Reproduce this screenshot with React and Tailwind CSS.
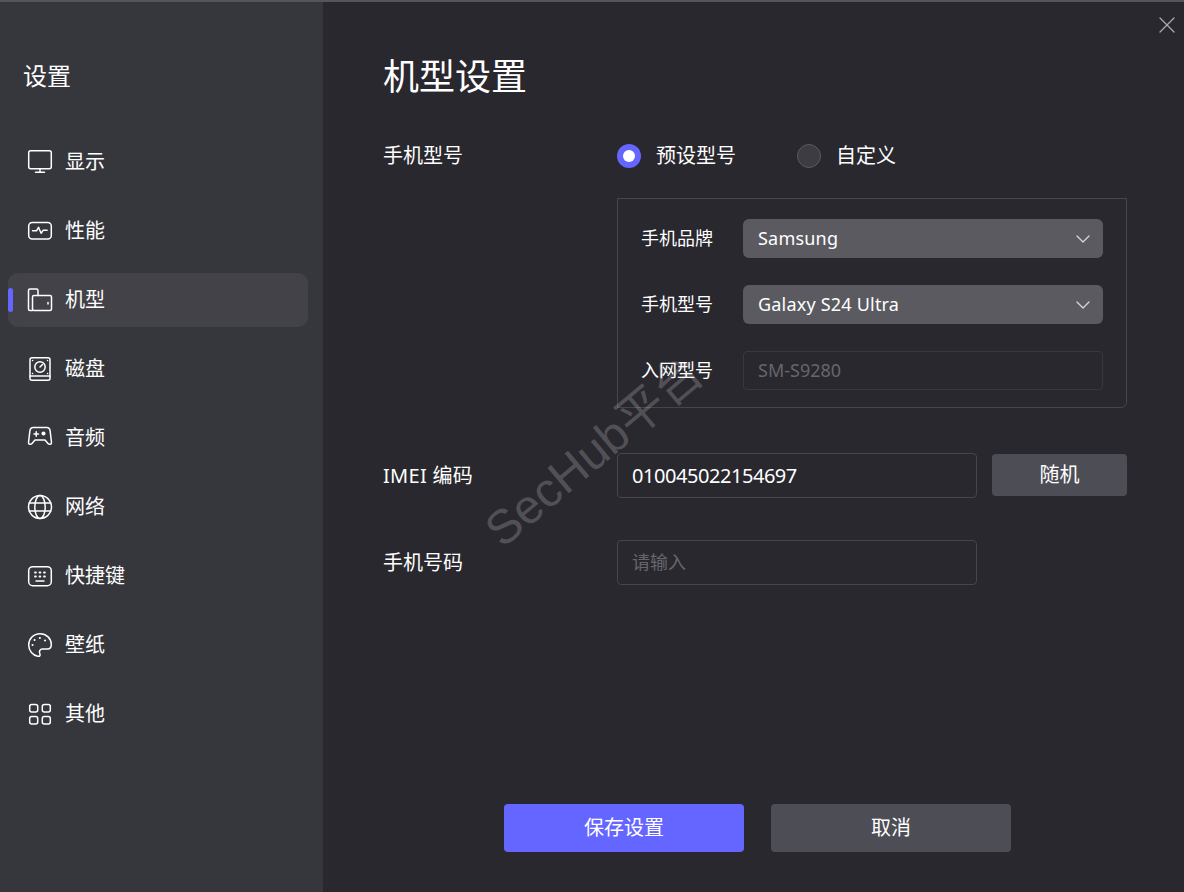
import { X, ChevronDown } from 'lucide-react';

const iconProps = {
  width: 26,
  height: 26,
  viewBox: '0 0 26 26',
  fill: 'none',
  stroke: 'currentColor',
  strokeWidth: 1.5,
  strokeLinecap: 'round',
  strokeLinejoin: 'round',
};

const MonitorIcon = () => (
  <svg {...iconProps}>
    <rect x="1.700" y="1.700" width="22.600" height="18" rx="2" />
    <path d="M13 20v3M8.500 23.300h9" />
  </svg>
);

const PulseIcon = () => (
  <svg {...iconProps}>
    <rect x="1.700" y="4.500" width="22.600" height="16.500" rx="3.500" />
    <path d="M5.500 12.800h4l2-3.500 2.600 6 2-3h4" />
  </svg>
);

const PhoneIcon = () => (
  <svg {...iconProps}>
    <path d="M5.500 23.500H3a1.500 1.500 0 0 1-1.500-1.500V3.500A1.500 1.500 0 0 1 3 2h6.500A1.500 1.500 0 0 1 11 3.500V8.500" />
    <rect x="5.500" y="8.500" width="19" height="15" rx="1.500" />
    <path d="M21 15.500v1.500" />
  </svg>
);

const DiskIcon = () => (
  <svg {...iconProps}>
    <rect x="3" y="1.700" width="20" height="22.600" rx="2" />
    <circle cx="13" cy="11" r="5.200" />
    <path d="M13 11l2.500-2.500M3 20h20" />
    <path d="M5.500 4.500h.1M20.500 4.500h.1M5.500 17.500h.1M20.500 17.500h.1" />
  </svg>
);

const GamepadIcon = () => (
  <svg {...iconProps}>
    <path d="M6 2.500h14c1.500 0 2.500 1 3 2.500l1.500 12.500c.2 1.800-2.300 2.500-3.500 1l-3-3.500H8l-3 3.500c-1.200 1.500-3.700.8-3.500-1L3 5c.5-1.500 1.500-2.500 3-2.500z" />
    <path d="M7 9h4.500M9.200 6.800v4.400" />
    <circle cx="16.500" cy="8.500" r="1.300" fill="currentColor" />
  </svg>
);

const GlobeIcon = () => (
  <svg {...iconProps}>
    <circle cx="13" cy="13" r="11.500" />
    <ellipse cx="13" cy="13" rx="5.200" ry="11.500" />
    <path d="M2.300 9h21.400M2.300 17h21.400" />
  </svg>
);

const KeyboardIcon = () => (
  <svg {...iconProps}>
    <rect x="1.700" y="3.700" width="22.600" height="19" rx="4" />
    <path d="M8 9.500h.9M12.500 9.500h.9M17 9.500h.9M8 13.500h.9M12.500 13.500h.9M17 13.500h.9" strokeWidth="1.800" />
    <path d="M9 18h8" />
  </svg>
);

const PaletteIcon = () => (
  <svg {...iconProps}>
    <path d="M13 1.700C6.500 1.700 1.700 6.700 1.700 13c0 6 4.200 10.500 9 11.300 2.500.4 2.800-1.300 2-3-.8-1.900.2-4.300 2.800-4.300h5c2.300 0 3.800-1.800 3.800-4.500C24.300 6.500 19.500 1.700 13 1.700z" />
    <path d="M5.500 13h.1M7.500 8h.1M12.800 6h.1M18 8.500h.1" strokeWidth="2" />
  </svg>
);

const GridIcon = () => (
  <svg {...iconProps}>
    <rect x="2.700" y="3.500" width="8" height="7.500" rx="2" />
    <rect x="15.300" y="3.500" width="8" height="7.500" rx="2" />
    <rect x="2.700" y="15.500" width="8" height="7.500" rx="2" />
    <rect x="15.300" y="15.500" width="8" height="7.500" rx="2" />
  </svg>
);

const menu = [
  { label: '显示', icon: MonitorIcon },
  { label: '性能', icon: PulseIcon },
  { label: '机型', icon: PhoneIcon, active: true },
  { label: '磁盘', icon: DiskIcon },
  { label: '音频', icon: GamepadIcon },
  { label: '网络', icon: GlobeIcon },
  { label: '快捷键', icon: KeyboardIcon },
  { label: '壁纸', icon: PaletteIcon },
  { label: '其他', icon: GridIcon },
];

const Select = ({ value }) => (
  <div className="flex h-[39px] w-[360px] items-center justify-between rounded-md bg-[#5a5a60] pl-[15px] pr-[8px] text-[18px] tracking-[0.2px] text-white">
    <span>{value}</span>
    <ChevronDown size={24} strokeWidth={1.3} className="text-[#d8d8dc]" />
  </div>
);

const SubRow = ({ label, children }) => (
  <div className="flex items-center">
    <span className="mb-[2px] w-[102px] text-[18px] leading-none text-white">{label}</span>
    {children}
  </div>
);

const App = () => {
  return (
    <div
      className="relative flex h-[892px] w-[1184px] overflow-hidden border-t-2 border-[#55565b] bg-[#29282e] text-white"
      style={{ fontFamily: '"Noto Sans", "Noto Sans CJK SC", sans-serif' }}
    >
      <aside className="flex w-[323px] shrink-0 flex-col bg-[#36373d]">
        <div className="flex h-[133px] items-start pl-[23px] pt-[56px] text-[24px] leading-[36px]">设置</div>
        <nav className="flex flex-col gap-[15px] pl-[8px]">
          {menu.map(({ label, icon: Icon, active }) => (
            <div
              key={label}
              className={`relative flex h-[54px] w-[300px] items-center gap-[12px] rounded-[10px] pl-[19px] text-[20px] ${active ? 'bg-[#434248]' : ''}`}
            >
              {active && <span className="absolute left-0 top-[15px] h-[24px] w-[5px] rounded-full bg-[#6565ff]" />}
              <Icon />
              <span>{label}</span>
            </div>
          ))}
        </nav>
      </aside>

      <main className="flex flex-1 flex-col pl-[60px]">
        <h1 className="mt-[48px] text-[36px] leading-[54px]">机型设置</h1>

        <div className="mt-[37px] flex items-center text-[20px] leading-[30px]">
          <span className="w-[234px]">手机型号</span>
          <div className="flex items-center gap-[15px]">
            <span className="flex h-[24px] w-[24px] items-center justify-center rounded-full bg-[#6565ff]">
              <span className="h-[12px] w-[12px] rounded-full bg-white" />
            </span>
            <span>预设型号</span>
          </div>
          <div className="ml-[61px] flex items-center gap-[15px]">
            <span className="h-[24px] w-[24px] rounded-full border border-[#5a5a60] bg-[#3c3c42]" />
            <span>自定义</span>
          </div>
        </div>

        <div className="ml-[234px] mt-[27px] flex h-[210px] w-[510px] flex-col gap-[27px] rounded-br-md border border-[#45454b] pl-[23px] pt-[20px]">
          <SubRow label="手机品牌">
            <Select value="Samsung" />
          </SubRow>
          <SubRow label="手机型号">
            <Select value="Galaxy S24 Ultra" />
          </SubRow>
          <SubRow label="入网型号">
            <div className="flex h-[39px] w-[360px] items-center rounded-[4px] border border-[#38383e] pl-[14px] text-[18px] text-[#66666c]">
              SM-S9280
            </div>
          </SubRow>
        </div>

        <div className="mt-[45px] flex items-center text-[20px]">
          <span className="w-[234px] tracking-[0.3px]">IMEI 编码</span>
          <div className="flex h-[45px] w-[360px] items-center rounded-[4px] border border-[#45454b] pl-[14px] tracking-[-0.45px]">010045022154697</div>
          <button className="mb-[2px] ml-[15px] h-[42px] w-[135px] rounded-[4px] bg-[#4d4d55] text-white">随机</button>
        </div>

        <div className="mt-[42px] flex items-center text-[20px]">
          <span className="w-[234px] pt-[1px]">手机号码</span>
          <div className="flex h-[45px] w-[360px] items-center rounded-[4px] border border-[#45454b] pl-[14px] text-[18px] text-[#66666c]">请输入</div>
        </div>

        <div className="ml-[121px] mt-[219px] flex gap-[27px] text-[20px]">
          <button className="h-[48px] w-[240px] rounded-[4px] bg-[#6565ff] text-white">保存设置</button>
          <button className="h-[48px] w-[240px] rounded-[4px] bg-[#4d4d55] text-white">取消</button>
        </div>
      </main>

      <X size={28} strokeWidth={1.1} className="absolute right-[3px] top-[9px] text-[#a9a9b4]" />

      <div
        className="pointer-events-none absolute left-[461px] top-[425px] -rotate-[40deg] whitespace-nowrap text-[48px] leading-none text-white/20"
        style={{ fontFamily: '"Liberation Sans", "Noto Sans CJK SC", sans-serif' }}
      >
        SecHub平台
      </div>
    </div>
  );
};

export default App;
